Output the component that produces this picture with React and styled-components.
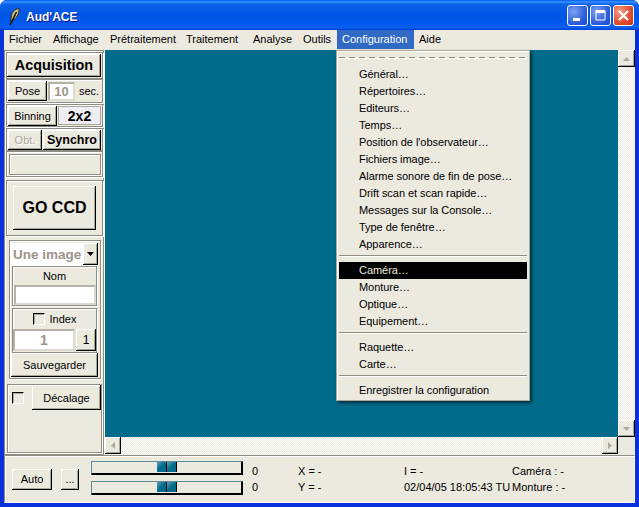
import styled, { createGlobalStyle, css } from "styled-components"

const UI_FONT = `"Liberation Sans", Arial, sans-serif`
const FACE = "#ece9df"
const LINE = "#8f8d82"

const raised = css`
    background: ${ FACE };
    box-shadow: inset -1px -1px 0 #000, inset 1px 1px 0 #fff, inset -2px -2px 0 #aca899;
`

const groove = css`
    border: 1px solid ${ LINE };
    box-shadow: inset 1px 1px 0 #fff, 1px 1px 0 #fff;
`

const Global = createGlobalStyle`
    html, body { margin: 0; padding: 0; background: #fff; }
    * { box-sizing: border-box; }
    body { font-family: ${ UI_FONT }; font-size: 11px; color: #000; }
`

// ─── Window frame ──────────────────────────────────────────────

const Win = styled.div`
    position: relative;
    width: 639px;
    height: 507px;
    display: flex;
    flex-direction: column;
    overflow: hidden;
    border-radius: 7px 7px 0 0;
    background: #0831d9;
`

const TitleBar = styled.div`
    height: 30px;
    flex: none;
    display: flex;
    align-items: center;
    padding: 3px 5px 0 8px;
    background: linear-gradient( 180deg, #0058ee 0%, #3593ff 6%, #0c62e8 14%, #0055e5 50%, #0058ee 80%, #0a60ec 92%, #003dd7 100% );
`

const TitleText = styled.span`
    color: #fff;
    font-size: 12px;
    font-weight: 700;
    margin-left: 5px;
    flex: 1;
    text-shadow: 1px 1px 0 #0f1089;
`

const CapBtn = styled.div`
    width: 21px;
    height: 21px;
    margin: -3px 0 0 2px;
    border: 1px solid #fff;
    border-radius: 3px;
    background: ${ ( { $close } ) => $close
        ? "radial-gradient( circle at 30% 30%, #f0a08a, #e2502f 55%, #c1341a )"
        : "radial-gradient( circle at 30% 30%, #7fa2f2, #2f5fdc 60%, #1f45c4 )" };
    display: flex;
    align-items: center;
    justify-content: center;
`

const Client = styled.div`
    flex: 1;
    min-height: 0;
    margin: 0 4px 4px;
    display: flex;
    flex-direction: column;
    background: ${ FACE };
`

// ─── Menu bar ──────────────────────────────────────────────────

const MenuBar = styled.div`
    height: 20px;
    flex: none;
    display: flex;
    align-items: flex-start;
`

const MenuTitle = styled.div`
    height: 19px;
    width: ${ ( { $w } ) => $w }px;
    line-height: 19px;
    padding-left: 5px;
    white-space: nowrap;
    color: ${ ( { $on } ) => $on ? "#fff" : "#000" };
    background: ${ ( { $on } ) => $on ? "#316ac5" : "transparent" };
`

const Body = styled.div`
    flex: 1;
    min-height: 0;
    display: flex;
`

// ─── Left panel ────────────────────────────────────────────────

const Side = styled.div`
    width: 100px;
    flex: none;
    margin-right: 1px;
    display: flex;
    flex-direction: column;
    padding: 1px;
    ${ groove }
`

const Frame = styled.div`
    display: flex;
    align-items: ${ ( { $top } ) => $top ? "flex-start" : "center" };
    flex: none;
    width: ${ ( { $w } ) => $w || 97 }px;
    height: ${ ( { $h } ) => $h }px;
    margin: ${ ( { $m } ) => $m || "0 0 1px 0" };
    padding: ${ ( { $p } ) => $p || "0 0 0 1px" };
    ${ groove }
`

const Btn = styled.div`
    ${ raised }
    flex: none;
    display: flex;
    align-items: center;
    justify-content: center;
    width: ${ ( { $w } ) => $w }px;
    height: ${ ( { $h } ) => $h }px;
    margin: ${ ( { $m } ) => $m || "0" };
    font-size: ${ ( { $size } ) => $size || 11 }px;
    font-weight: ${ ( { $bold } ) => $bold ? 700 : 400 };
    color: ${ ( { $off } ) => $off ? "#aca899" : "#000" };
    text-shadow: ${ ( { $off } ) => $off ? "1px 1px 0 #fff" : "none" };
`

const Entry = styled.div`
    flex: none;
    width: ${ ( { $w } ) => $w }px;
    height: ${ ( { $h } ) => $h }px;
    margin: ${ ( { $m } ) => $m || "0" };
    background: #fff;
    border: 2px solid;
    border-color: #b4b2a6 #dcdad0 #dcdad0 #b4b2a6;
    display: flex;
    align-items: center;
    justify-content: center;
    color: #9a968a;
    font-size: ${ ( { $size } ) => $size || 13 }px;
    font-weight: 700;
`

const Unit = styled.span`
    margin-left: 4px;
`

const Readout = styled.div`
    flex: none;
    width: 43px;
    height: 19px;
    margin-left: 1px;
    background: #f0eef5;
    border: 1px solid #aca899;
    display: flex;
    align-items: center;
    justify-content: center;
    font-size: 14px;
    font-weight: 700;
`

const Blank = styled.div`
    width: 92px;
    height: 21px;
    ${ groove }
`

const FormBox = styled.div`
    flex: none;
    width: 92px;
    height: 139px;
    margin: 4px 0 5px 3px;
    padding: 2px 1px 0 1px;
    ${ groove }
    display: flex;
    flex-direction: column;
`

const Combo = styled.div`
    display: flex;
    width: 87px;
    height: 23px;
    flex: none;
    background: #fff;
`

const ComboText = styled.div`
    flex: 1;
    color: #9a968a;
    font-size: 13.5px;
    font-weight: 700;
    line-height: 23px;
    padding-left: 2px;
`

const SubFrame = styled.div`
    flex: none;
    height: ${ ( { $h } ) => $h }px;
    margin: 0 0 ${ ( { $gap } ) => $gap || 0 }px 1px;
    width: 85px;
    ${ groove }
    display: flex;
    flex-direction: column;
    align-items: center;
`

const SubLabel = styled.div`
    line-height: 18px;
    height: 18px;
`

const Check = styled.div`
    flex: none;
    width: 12px;
    height: 12px;
    margin: ${ ( { $m } ) => $m || "0" };
    border: 1px solid #fff;
    border-top-color: #000;
    border-left-color: #000;
    box-shadow: inset 1px 1px 0 #aca899;
`

const IndexHead = styled.div`
    display: flex;
    align-items: center;
    height: 19px;
    flex: none;
`

const IndexRow = styled.div`
    display: flex;
    flex: none;
    margin-top: 1px;
`

const Canvas = styled.div`
    flex: 1;
    min-width: 0;
    display: grid;
    grid-template-columns: 1fr 17px;
    grid-template-rows: 1fr 18px;
`

const View = styled.div`
    background: #006b8a;
`

const Track = styled.div`
    display: flex;
    flex-direction: ${ ( { $v } ) => $v ? "column" : "row" };
    justify-content: space-between;
    background: repeating-conic-gradient( ${ FACE } 0 25%, #fff 0 50% ) 0 0 / 2px 2px;
`

const Arrow = styled.div`
    ${ raised }
    flex: none;
    width: ${ ( { $v } ) => $v ? "17px" : "16px" };
    height: 17px;
    display: flex;
    align-items: center;
    justify-content: center;
`

const Corner = styled.div`
    background: ${ FACE };
`

// ─── Status area ───────────────────────────────────────────────

const Status = styled.div`
    height: 48px;
    flex: none;
    display: flex;
    border: 1px solid ${ LINE };
    border-right-color: #fff;
    border-bottom-color: #fff;
    box-shadow: inset 1px 1px 0 #fff;
    padding: 0 0 0 7px;
    align-items: center;
`

const Sliders = styled.div`
    display: flex;
    flex-direction: column;
    gap: 6px;
    margin: -2px 0 0 12px;
`

const Slider = styled.div`
    position: relative;
    width: 152px;
    height: 14px;
    border: 1px solid;
    border-color: #5f8a9a #000 #000 #5f8a9a;
    box-shadow: inset -1px -1px 0 #000;
`

const Thumb = styled.div`
    position: absolute;
    left: 65px;
    top: 0;
    width: 20px;
    height: 10px;
    display: flex;
    background: #000;
`

const ThumbHalf = styled.div`
    flex: 1;
    margin-right: 1px;
    background: linear-gradient( 135deg, #5fa0b8, #006b8a 50% );
`

const ReadCol = styled.div`
    flex: none;
    width: ${ ( { $w } ) => $w }px;
    margin-left: ${ ( { $ml } ) => $ml || 0 }px;
    display: flex;
    flex-direction: column;
    gap: 3px;
    line-height: 13px;
    white-space: nowrap;
`

// ─── Tear-off menu ─────────────────────────────────────────────

const Menu = styled.div`
    position: absolute;
    left: 336px;
    top: 50px;
    width: 194px;
    height: 351px;
    padding: 2px;
    background: ${ FACE };
    border: 1px solid #aca899;
    box-shadow: inset 1px 1px 0 #fff, 2px 2px 3px rgba( 0, 0, 0, 0.55 );
`

const Tear = styled.div`
    height: 2px;
    margin: 4px 0 7px;
    background:
        linear-gradient( 90deg, ${ LINE } 60%, transparent 60% ) 0 0 / 10px 1px repeat-x,
        linear-gradient( #fff, #fff ) 0 1px / 100% 1px no-repeat;
`

const Item = styled.div`
    height: 17px;
    line-height: 17px;
    padding-left: 20px;
    letter-spacing: -0.05px;
    white-space: nowrap;
    color: ${ ( { $on } ) => $on ? FACE : "#000" };
    background: ${ ( { $on } ) => $on ? "#000" : "transparent" };
`

const Sep = styled.div`
    height: 2px;
    margin: 2px 0 5px;
    background: ${ LINE };
    border-bottom: 1px solid #fff;
`

// ─── Data ──────────────────────────────────────────────────────

const menus = [
    [ "Fichier", 44 ], [ "Affichage", 57 ], [ "Prétraitement", 76 ], [ "Traitement", 67 ],
    [ "Analyse", 50 ], [ "Outils", 39 ], [ "Configuration", 77, true ], [ "Aide", 40 ],
]

const group_a = [ "Général…", "Répertoires…", "Editeurs…", "Temps…", "Position de l'observateur…", "Fichiers image…",
    "Alarme sonore de fin de pose…", "Drift scan et scan rapide…", "Messages sur la Console…", "Type de fenêtre…", "Apparence…" ]
const group_b = [ "Caméra…", "Monture…", "Optique…", "Equipement…" ]
const group_c = [ "Raquette…", "Carte…" ]

function Feather() {
    return <svg width="13" height="18" viewBox="0 0 13 18">
        <path d="M11 0.5 C6.5 1 3.5 4.5 3.2 9 L2.6 13 L6 11.5 C9.5 9 11.5 5 11 0.5 Z" fill="#cdbb84" stroke="#2e2a1c" strokeWidth="1" />
        <path d="M8.5 4 L2 17" stroke="#14140c" strokeWidth="1.5" fill="none" />
    </svg>
}

function Tri( { dir, color = "#aca899" } ) {
    const points = { up: "0,4 7,4 3.5,0", down: "0,0 7,0 3.5,4", left: "4,0 4,7 0,3.5", right: "0,0 0,7 4,3.5" }[ dir ]
    const wide = dir === "up" || dir === "down"
    return <svg width={ wide ? 7 : 4 } height={ wide ? 4 : 7 }><polygon points={ points } fill={ color } /></svg>
}

function Range() {
    return <Slider>
        <Thumb><ThumbHalf /><ThumbHalf /></Thumb>
    </Slider>
}

export default function App() {
    return <>
        <Global />
        <Win>
            <TitleBar>
                <Feather />
                <TitleText>Aud'ACE</TitleText>
                <CapBtn>
                    <svg width="15" height="15"><rect x="3" y="10" width="7" height="3" fill="#fff" /></svg>
                </CapBtn>
                <CapBtn>
                    <svg width="15" height="15"><path d="M3 2.5 H12 V12 H3 Z" fill="none" stroke="#fff" /><rect x="3" y="2" width="9" height="3" fill="#fff" /></svg>
                </CapBtn>
                <CapBtn $close>
                    <svg width="15" height="15"><path d="M3 3 L12 12 M12 3 L3 12" stroke="#fff" strokeWidth="2.2" /></svg>
                </CapBtn>
            </TitleBar>

            <Client>
                <MenuBar>
                    { menus.map( ( [ label, w, on ] ) => <MenuTitle key={ label } $w={ w } $on={ on }>{ label }</MenuTitle> ) }
                </MenuBar>

                <Body>
                    <Side>
                        <Frame $h={ 27 } $m="0" $p="0 0 1px 0">
                            <Btn $w={ 94 } $h={ 23 } $size={ 14.4 } $bold>Acquisition</Btn>
                        </Frame>
                        <Frame $h={ 24 }>
                            <Btn $w={ 39 } $h={ 20 } $m="0 1px 0 0">Pose</Btn>
                            <Entry $w={ 27 } $h={ 19 } $size={ 13 }>10</Entry>
                            <Unit>sec.</Unit>
                        </Frame>
                        <Frame $h={ 23 }>
                            <Btn $w={ 49 } $h={ 20 }>Binning</Btn>
                            <Readout>2x2</Readout>
                        </Frame>
                        <Frame $h={ 23 } $m="0">
                            <Btn $w={ 34 } $h={ 20 } $off>Obt.</Btn>
                            <Btn $w={ 58 } $h={ 20 } $size={ 12.5 } $bold $m="0 0 0 1px">Synchro</Btn>
                        </Frame>
                        <Frame $h={ 26 } $m="0 0 3px 0" $p="0 0 0 2px"><Blank /></Frame>
                        <Frame $h={ 56 } $m="0" $p="0 0 0 6px">
                            <Btn $w={ 83 } $h={ 44 } $size={ 16 } $bold>GO CCD</Btn>
                        </Frame>
                        <FormBox>
                            <Combo>
                                <ComboText>Une image</ComboText>
                                <Btn $w={ 15 } $h={ 22 }><Tri dir="down" color="#000" /></Btn>
                            </Combo>
                            <SubFrame $h={ 40 } $gap={ 2 }>
                                <SubLabel>Nom</SubLabel>
                                <Entry $w={ 82 } $h={ 20 } />
                            </SubFrame>
                            <SubFrame $h={ 45 }>
                                <IndexHead>
                                    <Check $m="0 5px 0 0" />
                                    Index
                                </IndexHead>
                                <IndexRow>
                                    <Entry $w={ 62 } $h={ 22 } $size={ 14 }>1</Entry>
                                    <Btn $w={ 20 } $h={ 22 } $m="0 0 0 1px" $size={ 12 }>1</Btn>
                                </IndexRow>
                            </SubFrame>
                            <Btn $w={ 87 } $h={ 24 }>Sauvegarder</Btn>
                        </FormBox>
                        <Frame $w={ 95 } $h={ 69 } $m="0 0 0 1px" $p="0 0 0 4px" $top>
                            <Check $m="7px 8px 0 0" />
                            <Btn $w={ 69 } $h={ 25 }>Décalage</Btn>
                        </Frame>
                    </Side>

                    <Canvas>
                        <View />
                        <Track $v>
                            <Arrow $v><Tri dir="up" /></Arrow>
                            <Arrow $v><Tri dir="down" /></Arrow>
                        </Track>
                        <Track>
                            <Arrow><Tri dir="left" /></Arrow>
                            <Arrow><Tri dir="right" /></Arrow>
                        </Track>
                        <Corner />
                    </Canvas>
                </Body>

                <Status>
                    <Btn $w={ 40 } $h={ 21 }>Auto</Btn>
                    <Btn $w={ 18 } $h={ 21 } $m="0 0 0 9px">...</Btn>
                    <Sliders>
                        <Range />
                        <Range />
                    </Sliders>
                    <ReadCol $w={ 46 } $ml={ 9 }><span>0</span><span>0</span></ReadCol>
                    <ReadCol $w={ 106 }><span>X = -</span><span>Y = -</span></ReadCol>
                    <ReadCol $w={ 108 }><span>I = -</span><span>02/04/05 18:05:43 TU</span></ReadCol>
                    <ReadCol $w={ 100 }><span>Caméra : -</span><span>Monture : -</span></ReadCol>
                </Status>
            </Client>

            <Menu>
                <Tear />
                { group_a.map( t => <Item key={ t }>{ t }</Item> ) }
                <Sep />
                { group_b.map( t => <Item key={ t } $on={ t === "Caméra…" }>{ t }</Item> ) }
                <Sep />
                { group_c.map( t => <Item key={ t }>{ t }</Item> ) }
                <Sep />
                <Item>Enregistrer la configuration</Item>
            </Menu>
        </Win>
    </>
}
